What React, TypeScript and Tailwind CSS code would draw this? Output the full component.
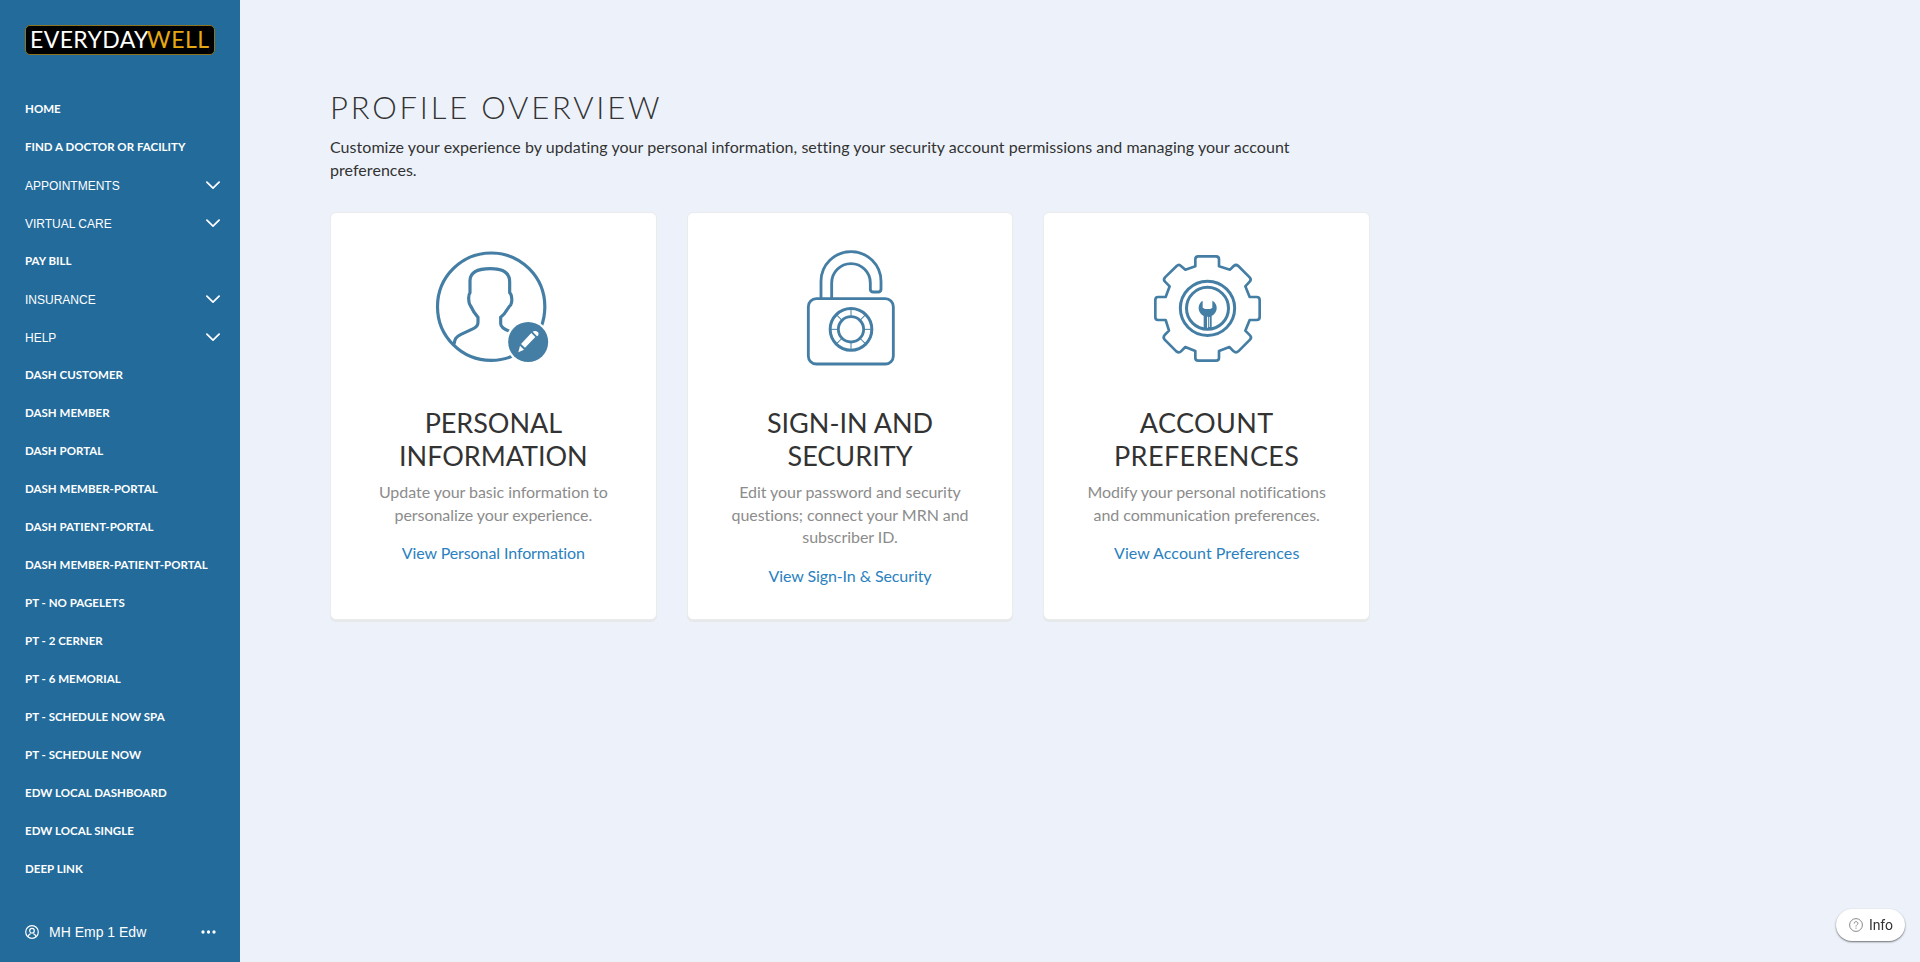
import type { ReactNode } from "react";

type NavItem = { label: string; menu?: boolean };

const navItems: NavItem[] = [
  { label: "HOME" },
  { label: "FIND A DOCTOR OR FACILITY" },
  { label: "APPOINTMENTS", menu: true },
  { label: "VIRTUAL CARE", menu: true },
  { label: "PAY BILL" },
  { label: "INSURANCE", menu: true },
  { label: "HELP", menu: true },
  { label: "DASH CUSTOMER" },
  { label: "DASH MEMBER" },
  { label: "DASH PORTAL" },
  { label: "DASH MEMBER-PORTAL" },
  { label: "DASH PATIENT-PORTAL" },
  { label: "DASH MEMBER-PATIENT-PORTAL" },
  { label: "PT - NO PAGELETS" },
  { label: "PT - 2 CERNER" },
  { label: "PT - 6 MEMORIAL" },
  { label: "PT - SCHEDULE NOW SPA" },
  { label: "PT - SCHEDULE NOW" },
  { label: "EDW LOCAL DASHBOARD" },
  { label: "EDW LOCAL SINGLE" },
  { label: "DEEP LINK" },
];

const INK = "#457ea4";

function Chevron() {
  return (
    <svg width="14" height="9" viewBox="0 0 14 9" fill="none" stroke="#fff" strokeWidth="1.7" strokeLinecap="round" strokeLinejoin="round">
      <path d="M0.9 1.2 7 7.2 13.1 1.2" />
    </svg>
  );
}

function PersonIcon() {
  return (
    <svg width="140" height="140" viewBox="10 0 420 420" fill="none" stroke={INK} strokeWidth="9.500">
      <circle cx="214.500" cy="215" r="161" />
      <path d="M103 328C105 312 108 306 124 298L161 281C172 276 175 270 175 262V247C163 234 158 224 153 213C146 205 145 180 151 173V136C152 108 178 101 212 101S270 110 270 140V173C278 180 278 203 273 210C264 216 262 233 243 247V266C243 276 252 282 270 289" />
      <circle cx="325.500" cy="321" r="67" fill="#fff" stroke="none" />
      <circle cx="325.500" cy="321" r="60" fill={INK} stroke="none" />
      <g fill="#fff" stroke="none">
        <path d="M304 327 335 294 347 306 316 338Z" />
        <path d="M339 290C344 286 353 288 356 293 358 298 356 301 352 304Z" />
        <path d="M301 332 313 344 296 352Z" />
      </g>
    </svg>
  );
}

function PadlockIcon() {
  const ticks = [0, 45, 90, 135, 180, 225, 270, 315];
  return (
    <svg width="140" height="140" viewBox="0 0 420 420" fill="none" stroke={INK} strokeWidth="8.500">
      <rect x="85" y="191" width="255" height="196" rx="24" />
      <path d="M123 189V139A90 89 0 0 1 303 139V162Q303 171 294 171H280Q271 171 271 162V144A58 58 0 0 0 155 144V189" />
      <circle cx="213" cy="283" r="62.500" strokeWidth="9" />
      <circle cx="213" cy="283" r="38" />
      {ticks.map((a) => (
        <path key={a} d="M213 221V243" strokeWidth="3" transform={`rotate(${a} 213 283)`} />
      ))}
    </svg>
  );
}

function GearIcon() {
  return (
    <svg width="140" height="140" viewBox="-9 0 420 420" fill="none" stroke={INK} strokeWidth="8" strokeLinejoin="round">
      <path d="M166 94V73Q166 64 175 64H228Q237 64 237 73V94L270 104 281 93Q288 87 295 93L329 127Q335 134 329 140L316 154 329 186H350Q359 186 359 195V246Q359 255 350 255H329L316 287 330 301Q336 307 330 314L295 349Q288 355 281 349L268 336 237 348V368Q237 377 228 377H175Q166 377 166 368V348L136 336 123 349Q117 355 109 349L74 314Q68 307 74 300L87 287 77 255H54Q46 255 46 246V195Q46 186 54 186H77L89 154 75 140Q69 134 75 127L110 93Q117 86 123 93L136 104Z" />
      <circle cx="202.500" cy="220" r="81.500" strokeWidth="9" />
      <circle cx="202.500" cy="220" r="63" strokeWidth="9" />
      <path d="M188 197C172 206 171 232 191 243V280H201V245H204V280H215V243C235 232 235 206 217 197V218L211 222H195L188 218Z" fill={INK} stroke="none" />
      <path d="M208 246V276" stroke="#fff" strokeWidth="2.500" />
    </svg>
  );
}

type CardProps = { icon: ReactNode; title: string[]; text: string[]; link: string; titleClass?: string; linkClass?: string };

function Card({ icon, title, text, link, titleClass = "", linkClass = "" }: CardProps) {
  return (
    <section className="flex h-[408px] flex-1 flex-col items-center rounded-md border border-[#e9ebec] bg-white pt-[22px] text-center shadow-[0_2px_0_#e6e8e9]">
      {icon}
      <h2 className={`mt-[31px] text-[27px] leading-[33px] text-[#333] ${titleClass}`}>
        {title.map((line) => (
          <span key={line} className="block">{line}</span>
        ))}
      </h2>
      <p className="mt-[9px] text-base leading-[22.6px] tracking-[-0.05px] text-[#8c8c8c]">
        {text.map((line) => (
          <span key={line} className="block">{line}</span>
        ))}
      </p>
      <a href="#" className={`mt-[15px] text-base leading-[23px] text-[#2a81c0] ${linkClass}`}>{link}</a>
    </section>
  );
}

export default function App() {
  return (
    <div className="flex h-[962px] w-full overflow-hidden bg-[#edf2fa] font-['Lato',sans-serif] [font-variant-ligatures:none]">
      <aside className="flex w-60 shrink-0 flex-col bg-[#226b9b] text-white">
        <div className="ml-[25px] mt-[25px] flex h-[30px] w-[190px] shrink-0 items-center rounded-[5px] border border-[#8d7420] bg-black pb-[2px] pl-[4px] text-[23px] font-normal leading-none">
          <span className="tracking-[0.4px]">EVERYDAY</span>
          <span className="-ml-[2px] tracking-[0.5px] text-[#e5a812]">WELL</span>
        </div>
        <nav className="mt-[35px] flex flex-col">
          {navItems.map((item) => (
            <a key={item.label} href="#" className="flex h-[38px] items-center justify-between pl-[25px] pr-[20px]">
              {item.menu ? (
                <>
                  <span className="pt-[1px] font-['Liberation_Sans',sans-serif] text-xs">{item.label}</span>
                  <Chevron />
                </>
              ) : (
                <span className="text-[11.5px] font-bold tracking-[0.02px]">{item.label}</span>
              )}
            </a>
          ))}
        </nav>
        <div className="mt-[34px] flex items-center pl-[25px] pr-[24px] font-['Liberation_Sans',sans-serif] text-sm leading-[20px]">
          <svg width="14" height="14" viewBox="0 0 14 14" fill="none" stroke="#fff" strokeWidth="1.2">
            <circle cx="7" cy="7" r="6.300" />
            <circle cx="7" cy="5.700" r="2.300" />
            <path d="M3.200 11.700C3.300 9.900 4.200 9.200 5.600 8.600M8.400 8.600C9.800 9.200 10.700 9.900 10.800 11.700" />
          </svg>
          <span className="ml-[10px]">MH Emp 1 Edw</span>
          <svg className="ml-auto" width="15" height="4" viewBox="0 0 15 4" fill="#fff">
            <circle cx="2" cy="2" r="1.650" />
            <circle cx="7.500" cy="2" r="1.650" />
            <circle cx="13" cy="2" r="1.650" />
          </svg>
        </div>
      </aside>
      <main className="w-[1130px] pl-[90px] pt-[87px]">
        <h1 className="text-[31px] font-light leading-[40px] tracking-[2.8px] text-[#333]">PROFILE OVERVIEW</h1>
        <p className="mt-[8px] text-base leading-[23px] tracking-[0.045px] text-[#333]">
          Customize your experience by updating your personal information, setting your security account permissions and managing your account
          <br />
          preferences.
        </p>
        <div className="mt-[31px] flex gap-[30px]">
          <Card
            icon={<PersonIcon />}
            title={["PERSONAL", "INFORMATION"]}
            text={["Update your basic information to", "personalize your experience."]}
            link="View Personal Information"
            titleClass="tracking-[-0.05px]"
            linkClass="tracking-[-0.1px]"
          />
          <Card
            icon={<PadlockIcon />}
            title={["SIGN-IN AND", "SECURITY"]}
            text={["Edit your password and security", "questions; connect your MRN and", "subscriber ID."]}
            link="View Sign-In & Security"
            linkClass="tracking-[-0.1px]"
          />
          <Card
            icon={<GearIcon />}
            title={["ACCOUNT", "PREFERENCES"]}
            text={["Modify your personal notifications", "and communication preferences."]}
            link="View Account Preferences"
            titleClass="tracking-[0.4px]"
            linkClass="tracking-[0.06px]"
          />
        </div>
      </main>
      <button className="fixed bottom-[21px] right-[15px] flex h-[32px] w-[69px] items-center rounded-full bg-white pl-[13px] text-sm text-[#333] shadow-[0_1px_2px_rgba(0,0,0,0.55)]">
        <svg width="14" height="14" viewBox="0 0 14 14" fill="none" stroke="#888" strokeWidth="1">
          <circle cx="7" cy="7" r="6.400" />
          <path d="M5.100 5.600C5.100 3 8.900 3 8.900 5.400 8.900 6.800 7 6.700 7 8.500M7 9.600V10.700" />
        </svg>
        <span className="ml-[6px] font-['Roboto',sans-serif] tracking-[-0.1px]">Info</span>
      </button>
    </div>
  );
}
